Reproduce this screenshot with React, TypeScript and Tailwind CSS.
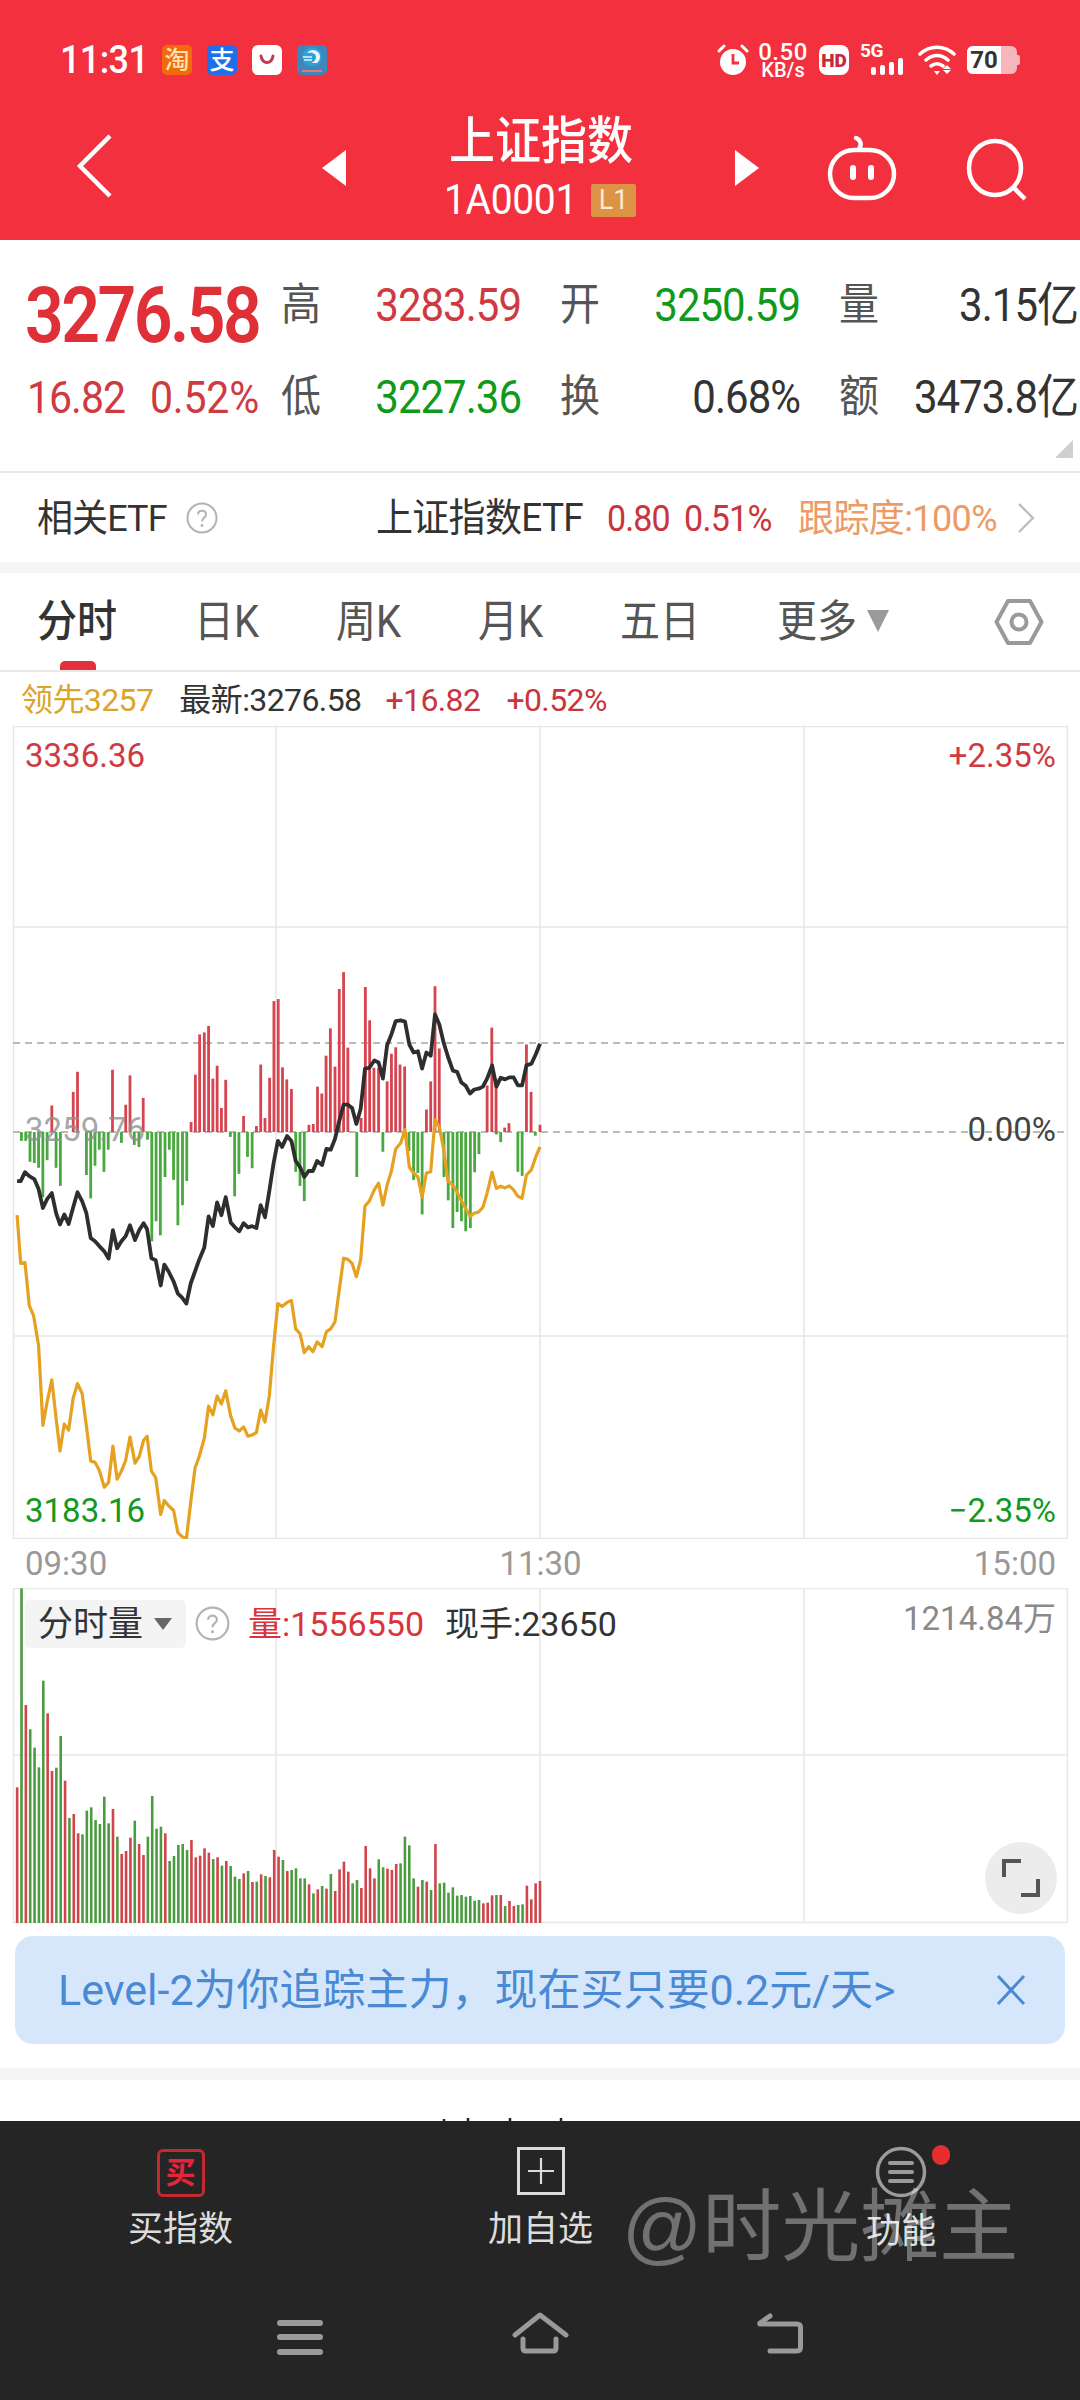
import React from "react";

const FONT = "font-['Roboto','Noto_Sans_CJK_SC',sans-serif]";

const black: [number, number][] = [[48,600],[58,600],[70,578],[82,588],[96,595],[108,620],[120,667],[132,645],[145,630],[157,680],[168,708],[180,683],[192,707],[205,665],[217,628],[230,650],[242,680],[254,742],[266,750],[278,762],[292,775],[304,793],[316,722],[328,767],[340,750],[352,737],[364,710],[378,747],[390,722],[402,705],[412,720],[424,792],[436,797],[450,860],[460,808],[472,825],[486,850],[498,880],[510,890],[522,905],[534,855],[546,825],[558,795],[572,765],[584,688],[596,712],[608,653],[620,685],[632,640],[646,703],[658,715],[670,725],[682,705],[694,715],[706,712],[718,717],[730,660],[742,690],[754,625],[766,555],[778,500],[790,515],[804,488],[816,500],[828,550],[840,565],[852,590],[864,575],[876,575],[888,550],[902,560],[914,520],[926,522],[938,495],[950,450],[962,410],[974,410],[986,418],[998,458],[1010,420],[1022,320],[1034,318],[1048,300],[1060,305],[1072,345],[1084,262],[1096,235],[1108,202],[1122,200],[1134,203],[1146,260],[1158,280],[1170,277],[1182,320],[1194,280],[1206,288],[1218,185],[1230,210],[1242,255],[1254,290],[1268,325],[1280,328],[1292,355],[1304,363],[1316,382],[1328,372],[1340,370],[1352,365],[1364,345],[1378,312],[1390,365],[1402,343],[1414,347],[1426,342],[1438,342],[1450,362],[1462,362],[1474,312],[1488,308],[1500,285],[1512,258]];
const orange: [number, number][] = [[48,685],[58,805],[70,803],[82,910],[94,935],[108,1010],[120,1208],[132,1150],[145,1095],[157,1190],[168,1272],[180,1205],[192,1220],[205,1140],[217,1104],[230,1128],[242,1210],[254,1297],[266,1300],[278,1320],[292,1362],[304,1350],[316,1260],[328,1342],[340,1322],[352,1295],[364,1237],[378,1302],[390,1285],[402,1245],[412,1235],[424,1322],[436,1338],[450,1430],[460,1395],[472,1408],[486,1420],[498,1475],[510,1485],[522,1490],[534,1400],[546,1315],[558,1285],[572,1240],[584,1160],[596,1182],[608,1135],[620,1155],[632,1122],[646,1185],[658,1215],[670,1222],[682,1212],[694,1235],[706,1232],[718,1226],[730,1170],[742,1200],[754,1135],[766,1010],[778,905],[790,912],[804,902],[816,897],[828,968],[840,980],[852,1027],[864,1012],[876,1025],[888,1000],[902,1012],[914,975],[926,968],[938,950],[950,870],[962,792],[974,795],[986,805],[998,838],[1010,795],[1022,662],[1034,650],[1048,622],[1060,605],[1072,660],[1084,610],[1096,575],[1108,520],[1122,505],[1134,472],[1146,565],[1158,580],[1170,590],[1182,640],[1194,580],[1206,577],[1218,447],[1230,465],[1242,520],[1254,600],[1268,610],[1280,628],[1292,650],[1304,668],[1316,688],[1328,680],[1340,677],[1352,665],[1364,630],[1378,578],[1390,618],[1402,613],[1414,617],[1426,612],[1438,622],[1450,638],[1462,643],[1474,585],[1488,572],[1500,540],[1512,515]];
const redDiff: [number, number][] = [[145,412],[205,378],[217,328],[315,323],[352,410],[364,337],[401,393],[535,453],[547,335],[559,235],[572,230],[584,214],[596,345],[608,313],[620,418],[632,348],[682,438],[718,463],[730,310],[742,443],[755,343],[767,152],[779,147],[791,317],[803,347],[816,371],[865,460],[877,458],[889,365],[901,382],[913,288],[925,220],[938,315],[950,122],[962,80],[974,268],[1011,443],[1023,117],[1035,200],[1047,318],[1060,318],[1084,352],[1096,283],[1108,267],[1120,310],[1133,315],[1194,422],[1206,352],[1218,115],[1230,270],[1364,362],[1377,218],[1389,345],[1413,467],[1425,456],[1474,260],[1487,378],[1512,460]];
const greenDiff: [number, number][] = [[60,500],[72,500],[84,552],[96,555],[108,567],[120,640],[132,548],[157,567],[169,612],[242,585],[254,643],[266,562],[278,522],[291,577],[303,522],[340,505],[376,510],[389,515],[413,497],[425,750],[437,700],[449,735],[462,590],[474,522],[486,597],[498,710],[511,660],[523,600],[645,490],[657,638],[669,582],[693,540],[706,568],[828,577],[840,612],[852,650],[999,590],[1072,527],[1145,525],[1158,597],[1170,580],[1182,683],[1243,590],[1255,648],[1268,717],[1280,677],[1292,700],[1304,725],[1317,717],[1329,578],[1341,533],[1390,484],[1402,503],[1450,577],[1462,587],[1499,487]];
const vols = "r652 g55 r405 g478 g533 g592 g332 r430 r603 g593 g498 r632 g744 r732 r790 g793 g722 g712 g750 g762 g680 g760 r717 g800 r852 r843 r803 g752 r822 r855 g800 g678 g776 g770 r790 g873 g858 g825 g822 g840 r810 r862 r857 r835 r848 g867 r862 g887 r873 g888 g920 g927 r910 g903 r936 g935 r913 g918 r922 r840 r860 g870 r903 g900 g895 g925 g925 r943 g970 r958 g948 r956 g912 r963 r898 r875 r905 g940 g930 r954 r828 r895 r925 g868 g892 r896 r900 r882 g880 g800 g826 g925 r950 g930 r935 g960 r822 g940 g938 g968 g952 g977 g975 g980 g978 g992 g990 r1000 r998 r976 g975 r975 g1008 r993 r1008 g1005 g1003 r947 r988 r940 r933".split(" ");

const px = (X: number) => X / 2.8;
const py = (Y: number) => 940 + Y / 2.489 - 726;
const line = (a: [number, number][]) => a.map(([x, y]) => `${px(x).toFixed(1)},${py(y).toFixed(1)}`).join(" ");

function PriceChart() {
  return (
    <svg className="absolute inset-0" width="1080" height="813" viewBox="0 0 1080 813">
      <g stroke="#e6e6e6" strokeWidth="1.5" fill="none">
        <path d="M13.5 0.5H1067.5V812.5H13.5Z" />
        <path d="M276 0V813M540 0V813M804 0V813M13 201H1067M13 610H1067" />
      </g>
      <g stroke="#a8a49a" strokeWidth="1.5" fill="none" strokeDasharray="7 5">
        <path d="M13 317H1067" />
        <path d="M13 406H1067" />
      </g>
      {redDiff.map(([x, y]) => (
        <rect key={x} x={px(x) - 1.4} y={py(y)} width="2.8" height={py(478) - py(y)} fill="#d5444f" />
      ))}
      {greenDiff.map(([x, y]) => (
        <rect key={x} x={px(x) - 1.4} y={py(478)} width="2.8" height={py(y) - py(478)} fill="#49a83e" />
      ))}
      <polyline points={line(orange)} fill="none" stroke="#e5a11f" strokeWidth="3.2" strokeLinejoin="round" />
      <polyline points={line(black)} fill="none" stroke="#2e2e2e" strokeWidth="3.8" strokeLinejoin="round" />
    </svg>
  );
}

function VolumeChart() {
  return (
    <svg className="absolute inset-0" width="1080" height="336" viewBox="0 0 1080 336">
      <g stroke="#e8e8e8" strokeWidth="1.5" fill="none">
        <path d="M13.5 0.5H1067.5V334.5H13.5Z" />
        <path d="M276 0V335M540 0V335M804 0V335M13 167H1067" />
      </g>
      {vols.map((v, i) => {
        const Y = Number(v.slice(1));
        const x = (48 + 12.2 * i) / 2.8;
        const top = Y / 3 - 18;
        return <rect key={i} x={x - 1.3} y={top} width="2.6" height={335 - top} fill={v[0] === "r" ? "#d0444c" : "#4b9c40"} />;
      })}
    </svg>
  );
}

function StatusBar() {
  return (
    <div className="flex h-[60px] items-center justify-between pl-[60px] pr-[60px]">
      <div className="flex items-center">
        <span className="inline-block w-[87px] origin-left scale-y-110 whitespace-nowrap text-[36px] font-medium leading-none tracking-[-0.6px] text-white">11:31</span>
        <div className="ml-[15px] flex h-[30px] w-[30px] items-center justify-center rounded-[5px] bg-[#f26a0a] text-[25px] font-medium leading-none text-[#ffe2b0]">淘</div>
        <div className="ml-[15px] flex h-[30px] w-[30px] items-center justify-center rounded-[5px] bg-[#1f6fe8] text-[25px] font-medium leading-none text-white">支</div>
        <div className="ml-[15px] flex h-[30px] w-[30px] items-center justify-center rounded-[6px] bg-white">
          <svg width="20" height="14" viewBox="0 0 20 14"><path d="M4 3c1 5 3.5 6.5 6 6.5S15 8 16 3" fill="none" stroke="#c23b50" strokeWidth="3" strokeLinecap="round" /></svg>
        </div>
        <div className="ml-[15px] flex h-[30px] w-[30px] items-center justify-center rounded-[5px] bg-[#3f86bb]">
          <svg width="26" height="28" viewBox="0 0 26 28">
            <circle cx="13" cy="11" r="10" fill="#2f9fd8" />
            <path d="M8 7c3-4 9-4 12 0 2 3 1 8-2 10h-6c3-1 5-3 5-6s-3-5-9-4z" fill="#e8f6fc" />
            <path d="M4 11h9M5 14h8" stroke="#e8f6fc" strokeWidth="1.6" />
            <rect x="3" y="24" width="20" height="2" fill="#e07a7a" />
          </svg>
        </div>
      </div>
      <div className="flex items-center">
        <svg width="32" height="34" viewBox="0 0 32 34">
          <circle cx="16" cy="19" r="13" fill="#fff" />
          <path d="M16 11v9h6" fill="none" stroke="#f2303e" strokeWidth="2.8" />
          <path d="M2 8l5-5M30 8l-5-5" stroke="#fff" strokeWidth="3" strokeLinecap="round" />
        </svg>
        <div className="ml-[9px] flex w-[50px] flex-col items-center font-medium text-white">
          <span className="text-[24px] leading-[19px] tracking-[0.5px]">0.50</span>
          <span className="text-[20px] leading-[16px]">KB/s</span>
        </div>
        <div className="ml-[11px] flex h-[30px] w-[30px] items-center justify-center rounded-[8px] bg-white text-[19px] font-black leading-none text-[#c8283a]">HD</div>
        <div className="ml-[11px] flex h-[32px] w-[46px] flex-col">
          <span className="text-[19px] font-bold leading-[14px] tracking-[-0.5px] text-white">5G</span>
          <svg width="46" height="18" viewBox="0 0 46 18">
            <rect x="11" y="9" width="5" height="8" rx="2" fill="#fff" />
            <rect x="20" y="7" width="5" height="10" rx="2" fill="#fff" />
            <rect x="29" y="4" width="5" height="13" rx="2" fill="#fff" />
            <rect x="38" y="0" width="5" height="17" rx="2" fill="#fff" />
          </svg>
        </div>
        <svg className="ml-[12px]" width="38" height="30" viewBox="0 0 38 30">
          <path d="M2 9c10-9 24-9 34 0M8 15c7-6 15-6 22 0M13 21c4-3 8-3 12 0" fill="none" stroke="#fff" strokeWidth="3.6" strokeLinecap="round" />
          <path d="M16 26h6l-3 4zM29 20l4 4h-8zM25 25h8l-4 4z" fill="#fff" />
        </svg>
        <div className="ml-[11px] flex items-center">
          <div className="flex h-[28px] w-[50px] items-center overflow-hidden rounded-[6px] bg-[#f7b6bb]">
            <div className="flex h-full w-[34px] items-center justify-center bg-white text-[24px] font-bold leading-none text-[#333]">70</div>
          </div>
          <div className="h-[10px] w-[3px] rounded-r-[2px] bg-[#f7b6bb]" />
        </div>
      </div>
    </div>
  );
}

function Header() {
  return (
    <header className="h-[240px] bg-[#f2303e] pt-[30px]">
      <StatusBar />
      <div className="relative flex h-[150px] items-start">
        <svg className="ml-[75px] mt-[43px]" width="40" height="66" viewBox="0 0 40 66">
          <path d="M35 3L5 33l30 30" fill="none" stroke="#fff" strokeWidth="4.5" />
        </svg>
        <svg className="ml-[207px] mt-[60px]" width="24" height="36" viewBox="0 0 24 36"><path d="M24 0v36L0 18z" fill="#fff" /></svg>
        <div className="ml-[85px] flex w-[220px] flex-col items-center">
          <div className="mt-[25px] h-[52px] origin-center scale-y-110 text-[46px] font-medium leading-[52px] text-white">上证指数</div>
          <div className="mt-[11px] flex items-center pr-[2px]">
            <span className="inline-block scale-y-110 text-[39px] leading-[44px] tracking-[-0.3px] text-white">1A0001</span>
            <span className="ml-[14px] flex h-[33px] w-[45px] items-center justify-center rounded-[2px] bg-[#dc9346] text-[27px] leading-none text-[#ffe9d0]">L1</span>
          </div>
        </div>
        <svg className="ml-[84px] mt-[60px]" width="24" height="36" viewBox="0 0 24 36"><path d="M0 0v36l24-18z" fill="#fff" /></svg>
        <svg className="ml-[68px] mt-[45px]" width="70" height="66" viewBox="0 0 70 66" fill="none" stroke="#fff" strokeWidth="4.5">
          <rect x="3" y="15" width="64" height="48" rx="24" />
          <path d="M32 14c3-4 2-9-3-11" strokeLinecap="round" />
          <rect x="23" y="30" width="6" height="15" rx="3" fill="#fff" stroke="none" />
          <rect x="41" y="30" width="6" height="15" rx="3" fill="#fff" stroke="none" />
        </svg>
        <svg className="ml-[69px] mt-[47px]" width="62" height="64" viewBox="0 0 62 64" fill="none" stroke="#fff" strokeWidth="4.5">
          <ellipse cx="29" cy="31" rx="26" ry="27" />
          <path d="M47 50l12 12" />
        </svg>
      </div>
    </header>
  );
}

function Label({ children, first }: { children: React.ReactNode; first?: boolean }) {
  return <span className={`${first ? "" : "ml-[39px]"} inline-block w-[40px] shrink-0 scale-y-110 text-[40px] leading-none text-[#555]`}>{children}</span>;
}

function Value({ children, color, w }: { children: React.ReactNode; color: string; w: string }) {
  return <span className={`${w} ${color} inline-block shrink-0 scale-y-110 whitespace-nowrap text-right text-[42px] leading-none tracking-[-1px]`}>{children}</span>;
}

function Stats() {
  return (
    <section className="relative h-[233px] border-b-[2px] border-[#e8e8e8] bg-white">
      <div className="flex h-[132px] items-center">
        <span className="mt-[20px] inline-block w-[281px] shrink-0 scale-y-[1.14] pl-[25px] text-[68px] font-semibold leading-none tracking-[-2.6px] text-[#df2f37]">3276.58</span>
        <Label first>高</Label>
        <Value w="w-[200px]" color="text-[#cf3a42]">3283.59</Value>
        <Label>开</Label>
        <Value w="w-[200px]" color="text-[#0f9a1c]">3250.59</Value>
        <Label>量</Label>
        <Value w="w-[199px]" color="text-[#333]">3.15亿</Value>
      </div>
      <div className="flex h-[52px] items-center">
        <span className="flex w-[281px] shrink-0 scale-y-110 pl-[27px] text-[41px] leading-none tracking-[-1px] text-[#cf3a42]">
          <span className="w-[123px]">16.82</span>
          <span className="tracking-[-0.2px]">0.52%</span>
        </span>
        <Label first>低</Label>
        <Value w="w-[200px]" color="text-[#0f9a1c]">3227.36</Value>
        <Label>换</Label>
        <Value w="w-[200px]" color="text-[#333]">0.68%</Value>
        <Label>额</Label>
        <Value w="w-[199px]" color="text-[#333]">3473.8亿</Value>
      </div>
      <svg className="absolute bottom-[13px] right-[7px]" width="18" height="18" viewBox="0 0 18 18"><path d="M18 0v18H0z" fill="#cfcfcf" /></svg>
    </section>
  );
}

function QMark({ d }: { d: number }) {
  return (
    <svg width={d} height={d} viewBox="0 0 32 32">
      <circle cx="16" cy="16" r="14.5" fill="none" stroke="#b3b3b3" strokeWidth="2" />
      <path d="M12 12.5c0-5 8-5 8 0 0 3.5-4 3-4 7" fill="none" stroke="#b3b3b3" strokeWidth="2" />
      <circle cx="16" cy="23.5" r="1.4" fill="#b3b3b3" />
    </svg>
  );
}

function EtfRow() {
  return (
    <section className="flex h-[89px] items-center bg-white">
      <span className="ml-[37px] inline-block w-[137px] scale-y-105 text-[36px] leading-none tracking-[-0.9px] text-[#333]">相关ETF</span>
      <span className="ml-[12px] flex"><QMark d={32} /></span>
      <span className="ml-[158px] inline-block w-[208px] scale-y-105 whitespace-nowrap text-[37px] leading-none tracking-[-0.7px] text-[#333]">上证指数ETF</span>
      <span className="ml-[23px] inline-block w-[61px] scale-y-110 text-[34px] leading-none tracking-[-0.9px] text-[#c9343d]">0.80</span>
      <span className="ml-[16px] inline-block w-[88px] scale-y-110 text-[34px] leading-none tracking-[-0.7px] text-[#c9343d]">0.51%</span>
      <span className="ml-[26px] inline-block w-[200px] scale-y-105 whitespace-nowrap text-[36px] leading-none tracking-[-0.6px] text-[#ec9a66]">跟踪度:100%</span>
      <svg className="ml-[18px]" width="22" height="32" viewBox="0 0 22 32"><path d="M3 2l14 14L3 30" fill="none" stroke="#bdbdbd" strokeWidth="2.4" /></svg>
    </section>
  );
}

function Tabs() {
  return (
    <section className="relative flex h-[99px] items-center border-b-[2px] border-[#e8e8e8] bg-white pt-[3px] text-[40px] leading-none text-[#555]">
      <span className="ml-[37px] inline-block scale-y-110 font-medium text-[#333]">分时</span>
      <span className="ml-[77px] inline-block w-[66px] scale-y-110 whitespace-nowrap">日K</span>
      <span className="ml-[76px] inline-block w-[66px] scale-y-110 whitespace-nowrap">周K</span>
      <span className="ml-[76px] inline-block w-[66px] scale-y-110 whitespace-nowrap">月K</span>
      <span className="ml-[76px] inline-block scale-y-110">五日</span>
      <span className="ml-[77px] inline-block scale-y-110">更多</span>
      <svg className="mb-[4px] ml-[10px]" width="22" height="26" viewBox="0 0 22 26"><path d="M0 2h22L11 24z" fill="#9a9a9a" /></svg>
      <svg className="ml-[105px] mb-[3px]" width="50" height="48" viewBox="0 0 50 48" fill="none" stroke="#9a9a9a" strokeWidth="4">
        <path d="M14 3h22l11.500 21L36 45H14L2.500 24z" strokeLinejoin="round" />
        <circle cx="25" cy="24" r="7.500" />
      </svg>
      <div className="absolute bottom-0 left-[60px] h-[9px] w-[36px] rounded-t-[5px] bg-[#e4323c]" />
    </section>
  );
}

function InfoRow() {
  return (
    <section className="flex h-[54px] items-center bg-white pt-[2px] text-[32px] leading-none tracking-[-0.6px]">
      <span className="ml-[21px] whitespace-nowrap text-[#d9a62a]">领先3257</span>
      <span className="ml-[26px] whitespace-nowrap text-[#333]">最新:3276.58</span>
      <span className="ml-[24px] text-[#c9343d]">+16.82</span>
      <span className="ml-[26px] text-[#c9343d]">+0.52%</span>
    </section>
  );
}

function ChartPanel() {
  return (
    <section className="relative h-[813px] bg-white text-[33px] leading-none">
      <PriceChart />
      <div className="absolute inset-x-0 top-[13px] flex justify-between pl-[25px] pr-[24px]">
        <span className="text-[#cf3a42]">3336.36</span>
        <span className="text-[#cf3a42]">+2.35%</span>
      </div>
      <div className="absolute inset-x-0 top-[387px] flex justify-between pl-[25px] pr-[24px]">
        <span className="text-[#8f8f8f]/80">3259.76</span>
        <span className="text-[#444]">0.00%</span>
      </div>
      <div className="absolute inset-x-0 top-[768px] flex justify-between pl-[25px] pr-[24px]">
        <span className="text-[#129922]">3183.16</span>
        <span className="text-[#129922]">−2.35%</span>
      </div>
    </section>
  );
}

function TimeRow() {
  return (
    <section className="flex h-[49px] items-center justify-between bg-white pl-[25px] pr-[24px] text-[33px] leading-none text-[#999]">
      <span>09:30</span>
      <span>11:30</span>
      <span>15:00</span>
    </section>
  );
}

function VolumePanel() {
  return (
    <section className="relative h-[336px] bg-white">
      <VolumeChart />
      <div className="absolute left-[25px] top-[12px] flex h-[48px] w-[161px] items-center rounded-[5px] bg-[#f4f4f4] pl-[13px] text-[35px] leading-none text-[#333]">
        <span>分时量</span>
        <svg className="ml-[11px]" width="18" height="12" viewBox="0 0 18 12"><path d="M0 0h18L9 12z" fill="#666" /></svg>
      </div>
      <div className="absolute left-[195px] top-[18px] flex items-center text-[34px] leading-none">
        <QMark d={35} />
        <span className="ml-[18px] text-[#d9343c]">量:1556550</span>
        <span className="ml-[21px] text-[#333]">现手:23650</span>
      </div>
      <span className="absolute right-[24px] top-[14px] text-[33px] leading-none text-[#8a8a8a]">1214.84万</span>
      <div className="absolute left-[985px] top-[254px] flex h-[72px] w-[72px] items-center justify-center rounded-full bg-[#ececec]">
        <svg width="38" height="38" viewBox="0 0 38 38" fill="none" stroke="#555" strokeWidth="4">
          <path d="M2 18V2h17M36 20v16H19" />
        </svg>
      </div>
    </section>
  );
}

function Banner() {
  return (
    <section className="bg-white px-[15px] pb-[24px] pt-[12px]">
      <div className="flex h-[108px] items-center justify-between rounded-[18px] bg-[#d6e7fb] pl-[43px] pr-[39px] leading-none text-[#4a8ad4]">
        <span className="whitespace-nowrap text-[43px]">Level-2为你追踪主力，现在买只要0.2元/天&gt;</span>
        <svg width="30" height="32" viewBox="0 0 30 32"><path d="M2 2l26 28M28 2L2 30" fill="none" stroke="#4a8ad4" strokeWidth="3" /></svg>
      </div>
    </section>
  );
}

function BottomBar() {
  return (
    <footer className="relative h-[279px] bg-[#252525]">
      <svg className="absolute left-[440px] top-[-3px]" width="130" height="3" viewBox="0 0 130 3">
        <path d="M4 1v2M28 0v3M70 0v3M121 0v3" stroke="#222" strokeWidth="2.5" />
      </svg>
      <div className="flex h-[150px] pt-[25px] text-[35px] leading-none text-[#dcdcdc]">
        <div className="ml-[128px] flex w-[105px] flex-col items-center">
          <div className="mt-[3px] flex h-[48px] w-[48px] items-center justify-center rounded-[6px] border-[3px] border-[#c22a30] text-[30px] font-bold leading-none text-[#e5263a]">买</div>
          <span className="mt-[15px] whitespace-nowrap">买指数</span>
        </div>
        <div className="ml-[255px] flex w-[105px] flex-col items-center">
          <div className="mt-[1px] flex h-[48px] w-[48px] items-center justify-center border-[3px] border-[#dcdcdc]">
            <svg width="26" height="26" viewBox="0 0 26 26"><path d="M13 0v26M0 13h26" stroke="#dcdcdc" strokeWidth="2.2" /></svg>
          </div>
          <span className="mt-[17px] whitespace-nowrap">加自选</span>
        </div>
        <div className="relative ml-[273px] flex w-[70px] flex-col items-center">
          <svg width="52" height="52" viewBox="0 0 52 52" fill="none" stroke="#9b9b9b">
            <circle cx="26" cy="26" r="23.5" strokeWidth="3.5" />
            <path d="M15 17h22M15 26h22M15 35h22" strokeWidth="4" strokeLinecap="round" />
          </svg>
          <span className="mt-[16px] whitespace-nowrap">功能</span>
          <div className="absolute left-[66px] top-[-1px] h-[20px] w-[18px] rounded-full bg-[#e62e2e]" />
        </div>
      </div>
      <div className="flex items-start pt-[49px]">
        <svg className="ml-[277px]" width="46" height="36" viewBox="0 0 46 36"><path d="M3 3h40M3 17h40M3 32h40" stroke="#9a9a9a" strokeWidth="6" strokeLinecap="round" /></svg>
        <svg className="ml-[189px] mt-[-8px]" width="58" height="44" viewBox="0 0 58 44" fill="none" stroke="#9a9a9a" strokeWidth="5" strokeLinecap="round" strokeLinejoin="round">
          <path d="M3 23L28 3l26 20" />
          <path d="M11 27v9q0 3 3 3h27q3 0 3-3v-9" />
        </svg>
        <svg className="ml-[187px] mt-[-7px]" width="48" height="44" viewBox="0 0 48 44" fill="none" stroke="#9a9a9a" strokeWidth="5" strokeLinecap="round" strokeLinejoin="round">
          <path d="M3 11h37q3.500 0 3.500 3.500V34q0 4-3.500 4H13" />
          <path d="M3 10l10-7" />
        </svg>
      </div>
      <span className="absolute left-[622px] top-[67px] whitespace-nowrap font-['Liberation_Sans','Noto_Sans_CJK_SC',sans-serif] text-[79px] leading-none text-white/35">@时光摊主</span>
    </footer>
  );
}

export default function App() {
  return (
    <div className={`mx-auto h-[2400px] w-[1080px] overflow-hidden bg-white ${FONT}`}>
      <Header />
      <Stats />
      <EtfRow />
      <div className="h-[11px] bg-[#f5f5f5]" />
      <Tabs />
      <InfoRow />
      <ChartPanel />
      <TimeRow />
      <VolumePanel />
      <Banner />
      <div className="h-[12px] bg-[#f5f5f5]" />
      <div className="h-[41px] bg-white" />
      <BottomBar />
    </div>
  );
}
